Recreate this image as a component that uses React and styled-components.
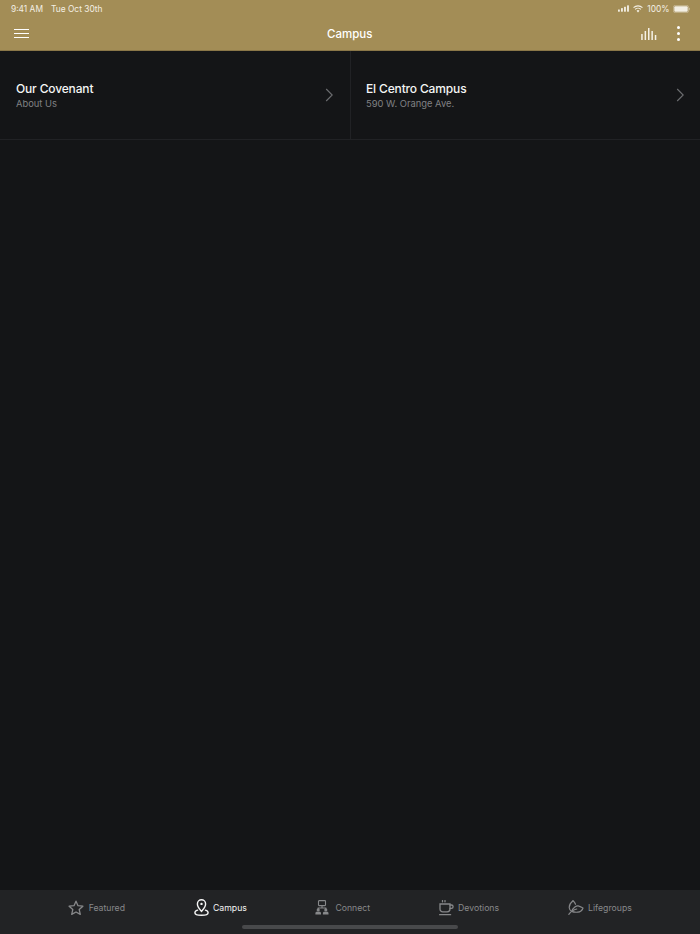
import React from 'react'
import styled, { createGlobalStyle } from 'styled-components'

const GlobalStyle = createGlobalStyle`
  html, body {
    margin: 0;
    padding: 0;
    background: #141517;
  }
  * { box-sizing: border-box; }
  body {
    font-family: Inter, "Liberation Sans", sans-serif;
  }
`

const cards = [
  { id: 1, title: 'Our Covenant', sub: 'About Us' },
  { id: 2, title: 'El Centro Campus', sub: '590 W. Orange Ave.' },
]

const StarIcon = () => (
  <svg width="16" height="16" viewBox="0 0 16 16" fill="none" stroke="currentColor" strokeWidth="1.3" strokeLinejoin="round">
    <path d="M8 1.2l2 4.5 4.9.5-3.7 3.3 1.1 4.9L8 12l-4.3 2.4 1.1-4.9L1.100 6.200 6 5.700z" />
  </svg>
)

const PinIcon = () => (
  <svg width="15" height="17" viewBox="0 0 15 17" fill="none" stroke="currentColor" strokeWidth="1.4" strokeLinecap="round">
    <path d="M7.500 12.400C5.400 9.800 3.400 7.800 3.400 4.900a4.100 4.100 0 0 1 8.200 0c0 2.900-2 4.900-4.100 7.500z" />
    <circle cx="7.500" cy="4.900" r="1.200" fill="currentColor" stroke="none" />
    <path d="M3.600 11.200C2 11.700.9 12.600.9 13.700c0 1.600 2.900 2.600 6.600 2.600s6.600-1 6.600-2.600c0-1.100-1.100-2-2.700-2.500" />
  </svg>
)

const ConnectIcon = () => (
  <svg width="15.500" height="15" viewBox="0 0 15.500 15" fill="none" stroke="currentColor" strokeWidth="1.100">
    <rect x="3.500" y="0.600" width="7" height="5" rx="0.600" />
    <path d="M7 5.600v2.400M3.200 9.200V8h7.600v1.200" />
    <circle cx="3.200" cy="9.900" r="1" fill="currentColor" />
    <circle cx="10.800" cy="9.900" r="1" fill="currentColor" />
    <path d="M0.400 14.500v-1.300c0-.8.600-1.400 1.400-1.400h2.800c.8 0 1.400.6 1.400 1.400v1.300zM7.900 14.500v-1.300c0-.8.600-1.400 1.400-1.400h2.800c.8 0 1.400.6 1.400 1.400v1.300z" fill="currentColor" stroke="none" />
  </svg>
)

const CupIcon = () => (
  <svg width="15" height="16" viewBox="0 0 15 16" fill="none" stroke="currentColor" strokeWidth="1.300" strokeLinecap="round">
    <path d="M3.500 0.600v1.200M6 0.600v1.200" />
    <path d="M1 4h10v5c0 1.700-1.200 2.800-2.800 2.800H3.800C2.200 11.800 1 10.700 1 9z" />
    <path d="M11 5h1.400c1 0 1.700.7 1.700 1.700S13.400 8.400 12.400 8.400H11" />
    <path d="M0.600 14.700h11" />
  </svg>
)

const LeafIcon = () => (
  <svg width="16" height="15" viewBox="0 0 16 15" fill="none" stroke="currentColor" strokeWidth="1.200" strokeLinejoin="round" strokeLinecap="round">
    <path d="M5 0.800C2.300 3 1 5.500 1.300 8c.2 1.600 1.100 2.700 2.200 3.300" />
    <path d="M5 0.800c1.300 1 2.100 2.200 2.500 3.500" />
    <path d="M3.800 11.400C5 7.700 8.300 5.300 11 6.100c1.500.4 2.800 1.400 4 1.900-.8 2.300-2.700 4-5.300 4.200-2.300.2-4.500-.1-5.900-.8z" />
    <path d="M0.800 14.300c2-2.700 4.700-4.600 8-5.300" />
  </svg>
)

const tabs = [
  { id: 'featured', label: 'Featured', icon: <StarIcon /> },
  { id: 'campus', label: 'Campus', icon: <PinIcon />, active: true },
  { id: 'connect', label: 'Connect', icon: <ConnectIcon /> },
  { id: 'devotions', label: 'Devotions', icon: <CupIcon /> },
  { id: 'lifegroups', label: 'Lifegroups', icon: <LeafIcon /> },
]

const App = () => {
  return (
    <>
      <GlobalStyle />
      <Page>
        <Header>
          <StatusBar>
            <StatusText>
              <span>9:41 AM</span>
              <span>Tue Oct 30th</span>
            </StatusText>
            <StatusIcons>
              <svg width="11" height="7" viewBox="0 0 12 7" fill="currentColor">
                <rect x="0" y="4.500" width="2" height="2.500" rx="0.400" />
                <rect x="3.300" y="3" width="2" height="4" rx="0.400" />
                <rect x="6.600" y="1.500" width="2" height="5.500" rx="0.400" />
                <rect x="9.900" y="0" width="2" height="7" rx="0.400" />
              </svg>
              <svg width="10" height="8" viewBox="0 0 11 8" fill="none" stroke="currentColor" strokeWidth="1.200">
                <path d="M0.600 2.600a7 7 0 0 1 9.800 0M2.300 4.400a4.600 4.600 0 0 1 6.400 0" />
                <path d="M5.500 7.800L3.900 6a2.300 2.300 0 0 1 3.200 0z" fill="currentColor" stroke="none" />
              </svg>
              <span>100%</span>
              <svg width="17.500" height="8" viewBox="0 0 17.500 8">
                <rect x="0.400" y="0.400" width="15.200" height="7.200" rx="1.800" fill="none" stroke="currentColor" strokeOpacity="0.450" strokeWidth="0.800" />
                <rect x="1.300" y="1.300" width="13.400" height="5.400" rx="1" fill="currentColor" />
                <rect x="16.300" y="2.800" width="1" height="2.400" rx="0.400" fill="currentColor" fillOpacity="0.500" />
              </svg>
            </StatusIcons>
          </StatusBar>
          <NavBar>
            <MenuButton aria-label="Menu">
              <span />
              <span />
              <span />
            </MenuButton>
            <Title>Campus</Title>
            <NavActions>
              <svg width="16" height="12" viewBox="0 0 16 12" fill="currentColor">
                <rect x="0.200" y="6" width="1.500" height="6" />
                <rect x="3.600" y="3" width="1.500" height="9" />
                <rect x="7" y="0" width="1.500" height="12" />
                <rect x="10.400" y="3" width="1.500" height="9" />
                <rect x="13.800" y="7" width="1.500" height="5" />
              </svg>
              <Dots>
                <i />
                <i />
                <i />
              </Dots>
            </NavActions>
          </NavBar>
        </Header>

        <CardGrid>
          {cards.map((item) => (
            <Card key={item.id}>
              <div>
                <CardTitle>{item.title}</CardTitle>
                <CardSub>{item.sub}</CardSub>
              </div>
              <svg width="9" height="14" viewBox="0 0 9 14" fill="none" stroke="#6c6d70" strokeWidth="1.100">
                <path d="M1.200 1l6 6-6 6" />
              </svg>
            </Card>
          ))}
        </CardGrid>

        <Spacer />

        <TabBar>
          {tabs.map((tab) => (
            <Tab key={tab.id} $active={tab.active}>
              {tab.icon}
              <span>{tab.label}</span>
            </Tab>
          ))}
          <HomeIndicator />
        </TabBar>
      </Page>
    </>
  )
}

const Page = styled.div`
  display: flex;
  flex-direction: column;
  width: 700px;
  height: 934px;
  overflow: hidden;
  background: #141517;
`

const Header = styled.header`
  height: 51px;
  background: #a38d56;
  border-bottom: 1px solid #8a7748;
  color: #fff;
`

const StatusBar = styled.div`
  display: flex;
  align-items: center;
  justify-content: space-between;
  height: 17px;
  padding: 0 10px 0 11px;
  font-size: 8.400px;
  color: #f3efe4;
`

const StatusText = styled.div`
  display: flex;
  gap: 8px;
`

const StatusIcons = styled.div`
  display: flex;
  align-items: center;
  gap: 4px;
  svg:last-child {
    margin-left: -1px;
  }
`

const NavBar = styled.div`
  display: grid;
  grid-template-columns: 313px auto 1fr;
  align-items: center;
  height: 33px;
  padding: 0 20px 0 14px;
`

const MenuButton = styled.div`
  display: flex;
  flex-direction: column;
  gap: 2.500px;
  width: 15px;
  span {
    display: block;
    height: 1.500px;
    background: #fff;
  }
`

const Title = styled.div`
  font-size: 11.500px;
  font-weight: 500;
  color: #fff;
`

const NavActions = styled.div`
  display: flex;
  align-items: center;
  justify-content: flex-end;
  gap: 20px;
  color: #f5f1e6;
`

const Dots = styled.div`
  display: flex;
  flex-direction: column;
  gap: 3px;
  i {
    display: block;
    width: 3px;
    height: 3px;
    border-radius: 50%;
    background: #fff;
  }
`

const CardGrid = styled.div`
  display: grid;
  grid-template-columns: 1fr 1fr;
  height: 89px;
  border-bottom: 1px solid #212225;
`

const Card = styled.div`
  display: flex;
  align-items: center;
  justify-content: space-between;
  padding: 0 16px;

  & + & {
    border-left: 1px solid #212225;
    padding-left: 15px;
    padding-right: 15px;
  }
`

const CardTitle = styled.div`
  font-size: 12px;
  line-height: 15px;
  font-weight: 500;
  letter-spacing: -0.150px;
  color: #f5f5f5;
`

const CardSub = styled.div`
  margin-top: 1px;
  font-size: 9.400px;
  line-height: 13px;
  color: #808184;
`

const Spacer = styled.div`
  flex: 1;
`

const TabBar = styled.nav`
  position: relative;
  display: flex;
  justify-content: center;
  align-items: flex-start;
  gap: 68.500px;
  height: 44px;
  padding-top: 9px;
  background: #222325;
`

const Tab = styled.div`
  display: flex;
  align-items: center;
  gap: 4.500px;
  height: 17px;
  font-size: 8.700px;
  color: ${(p) => (p.$active ? '#f5f5f5' : '#87888a')};
`

const HomeIndicator = styled.div`
  position: absolute;
  left: 242px;
  bottom: 5px;
  width: 216px;
  height: 4px;
  border-radius: 2px;
  background: #48494b;
`

export default App
